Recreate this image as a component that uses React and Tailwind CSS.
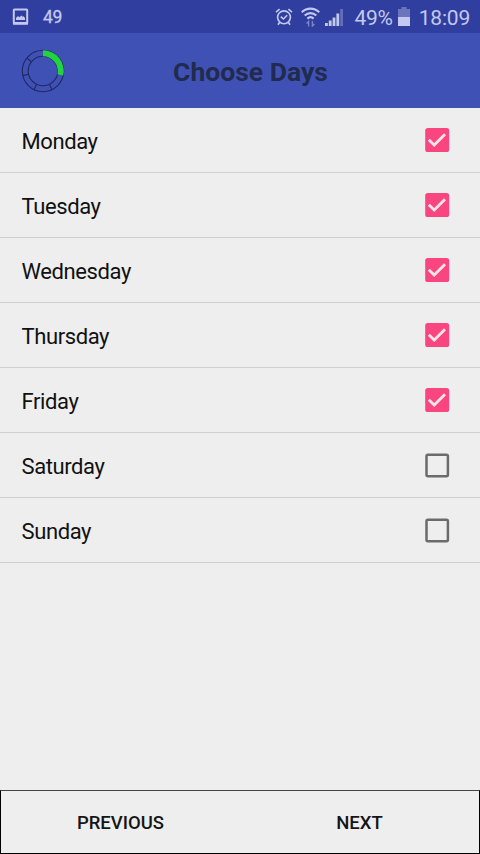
// App.jsx

import React, { useState } from 'react';

const DAYS = ['Monday', 'Tuesday', 'Wednesday', 'Thursday', 'Friday', 'Saturday', 'Sunday'];

const StatusBar = () => (
  <div className="flex h-[33px] shrink-0 items-center bg-[#303f9f] pl-3 pr-2.5 text-[#c3c9ee]">
    <svg width="17" height="18" viewBox="0 0 17 18">
      <rect x="1.8" y="1.6" width="13.4" height="14" rx="0.6" fill="none" stroke="currentColor" strokeWidth="2" />
      <path d="M1 14h15v2.6H1z" fill="currentColor" />
      <path d="M4 12V10l2-2 1.4 1.2L9.4 7.5l1.3 1.3.8-.6L13 10v2z" fill="currentColor" />
    </svg>
    <span className="ml-[14px] pt-0.5 text-[17.5px] leading-none tracking-[-0.4px] [-webkit-text-stroke:0.3px]">49</span>

    <div className="ml-auto flex items-center">
      {/* Alarm */}
      <svg width="18" height="18" viewBox="0 0 18 18" fill="none" stroke="currentColor" strokeWidth="1.6">
        <circle cx="9" cy="9.3" r="6.4" />
        <path d="M1 4.2 4.6 1.2M17 4.2 13.4 1.2M4.5 14.5 3 16.8M13.5 14.5 15 16.8M5.8 8.6 8.4 11l3.8-3.7" />
      </svg>
      {/* Wifi */}
      <svg className="ml-2" width="19" height="20" viewBox="0 0 19 20" fill="none" stroke="currentColor" strokeWidth="2.1">
        <path d="M.8 5.2C5.8.4 13.2.4 18.2 5.2M3.7 8.5c3.4-3.2 8.2-3.2 11.6 0M6.4 11.6c1.9-1.7 4.3-1.7 6.2 0" />
        <path d="M7.6 19.5v-5l-2 2M11.4 14v5l2-2" strokeWidth="1.4" opacity=".5" />
      </svg>
      {/* Signal */}
      <svg className="ml-[5px] mt-0.5" width="18" height="17" viewBox="0 0 18 17" fill="currentColor">
        <path d="M0 14h2.8v3H0zM3.8 11.5h2.8V17H3.8zM7.6 8.5h2.8V17H7.6z" />
        <path d="M11.4 4.5h2.8V17h-2.8z" />
        <path d="M15.2 0H18v17h-2.8z" opacity=".35" />
      </svg>
      <span className="ml-3 pt-[3px] text-[21px] leading-none tracking-[-0.3px]">49%</span>
      {/* Battery */}
      <svg className="ml-[5px]" width="12" height="19" viewBox="0 0 12 19" fill="currentColor">
        <path d="M3.5 0h5v2H12v8H0V2h3.5z" opacity=".4" />
        <path d="M0 10h12v9H0z" />
      </svg>
      <span className="ml-[9px] pt-[3px] text-[21px] leading-none tracking-[-0.2px]">18:09</span>
    </div>
  </div>
);

const ProgressRing = () => (
  <svg width="44" height="44" viewBox="-22 -22 44 44" fill="none">
    <circle r="20.7" stroke="#1f2861" strokeWidth="1.1" />
    <circle r="14.8" stroke="#1f2861" strokeWidth="1.1" />
    {[154.3, 205.7, 257.1, 308.6].map((angle) => (
      <path key={angle} d="M0-14.8V-20.7" stroke="#1f2861" strokeWidth="1.1" transform={`rotate(${angle})`} />
    ))}
    <path d="M0-20.7A20.7 20.7 0 0 1 20.2 4.6L14.4 3.2A14.8 14.8 0 0 0 0-14.8z" fill="#22d340" />
  </svg>
);

const Checkbox = ({ checked }) => (
  <svg width="26" height="26" viewBox="0 0 26 26" fill="none">
    {checked ? (
      <>
        <rect x="1.2" y="1" width="24" height="24" rx="2.6" fill="#f94580" />
        <path d="m4.8 12.7 5.4 5.3L21 7.3" stroke="#fbe4ec" strokeWidth="2.8" />
      </>
    ) : (
      <rect x="2.5" y="2.8" width="21.4" height="21.4" rx="1.4" stroke="#6b6b6b" strokeWidth="2.5" />
    )}
  </svg>
);

const App = () => {
  const [selected, setSelected] = useState(DAYS.slice(0, 5));

  const toggleDay = (day) => {
    setSelected(selected.includes(day) ? selected.filter((d) => d !== day) : [...selected, day]);
  };

  return (
    <div className="flex h-screen flex-col bg-[#eeeeee] font-['Roboto',sans-serif]">
      <StatusBar />

      {/* Header */}
      <header className="flex h-[75px] shrink-0 items-center bg-[#3f51b5] pl-[21px] pr-11">
        <ProgressRing />
        <h1 className="flex-1 pt-[3px] text-center text-[26.5px] font-bold text-[#202b4f]">Choose Days</h1>
      </header>

      {/* Day list */}
      <ul className="flex-1">
        {DAYS.map((day) => (
          <li key={day} className="border-b border-[#cecece]">
            <button
              type="button"
              role="checkbox"
              aria-checked={selected.includes(day)}
              onClick={() => toggleDay(day)}
              className="flex h-16 w-full items-center justify-between pl-[21.5px] pr-[30px] text-[22px] tracking-[-0.4px] text-[#111111]"
            >
              <span className="pt-[3px]">{day}</span>
              <Checkbox checked={selected.includes(day)} />
            </button>
          </li>
        ))}
      </ul>

      {/* Navigation */}
      <footer className="grid h-16 shrink-0 grid-cols-2 border border-black border-t-[#444444] pt-1 text-[18.5px] font-medium text-[#151515]">
        <button type="button">PREVIOUS</button>
        <button type="button">NEXT</button>
      </footer>
    </div>
  );
};

export default App;
